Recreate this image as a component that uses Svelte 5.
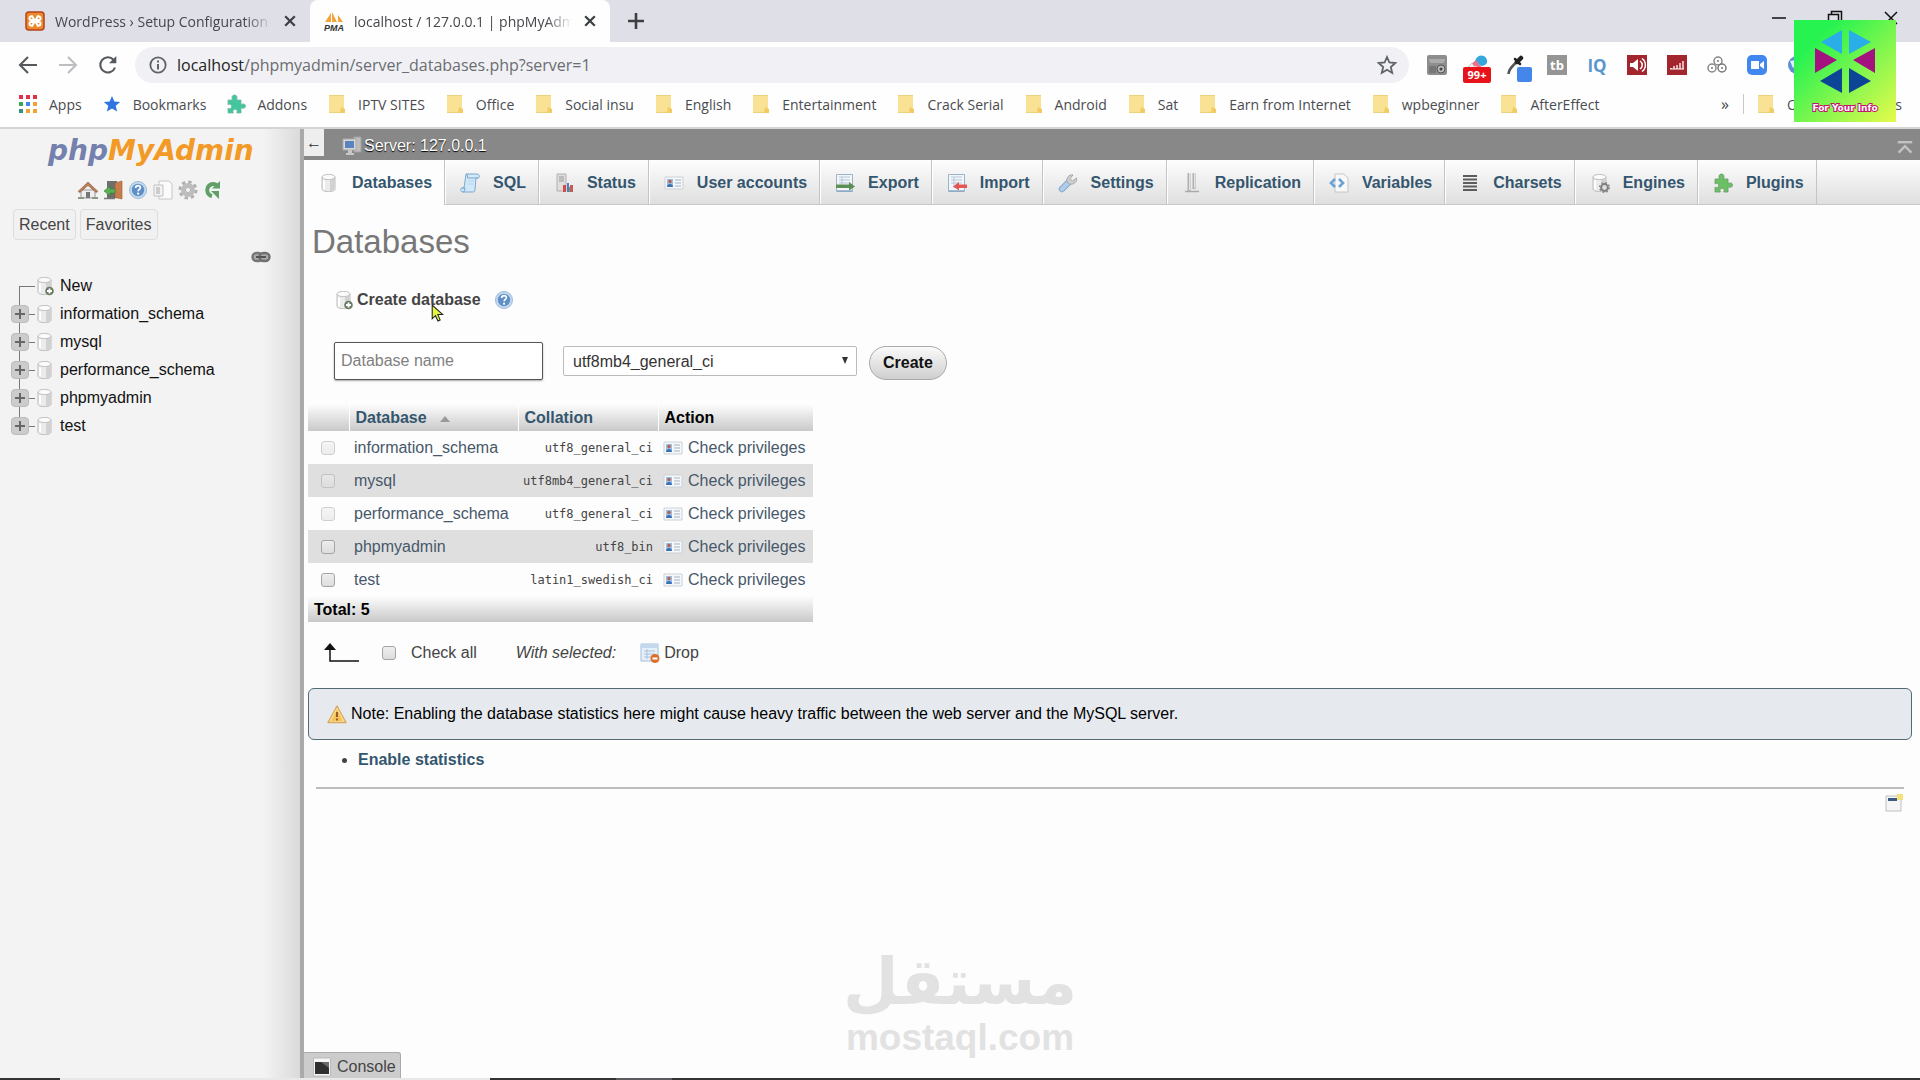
<script lang="ts">
  type Bookmark = { title: string; icon: string };

  const bookmarks: Bookmark[] = [
    { title: 'Apps', icon: 'apps' },
    { title: 'Bookmarks', icon: 'bluestar' },
    { title: 'Addons', icon: 'puzzle' },
    { title: 'IPTV SITES', icon: 'folder' },
    { title: 'Office', icon: 'folder' },
    { title: 'Social insu', icon: 'folder' },
    { title: 'English', icon: 'folder' },
    { title: 'Entertainment', icon: 'folder' },
    { title: 'Crack Serial', icon: 'folder' },
    { title: 'Android', icon: 'folder' },
    { title: 'Sat', icon: 'folder' },
    { title: 'Earn from Internet', icon: 'folder' },
    { title: 'wpbeginner', icon: 'folder' },
    { title: 'AfterEffect', icon: 'folder' },
  ];

  const extensions = ['tineye', 'rocket', 'picker', 'tb', 'iq', 'speaker', 'bars', 'circles', 'zoom', 'globe'];

  const tabs = [
    { title: 'Databases', icon: 'db' },
    { title: 'SQL', icon: 'sql' },
    { title: 'Status', icon: 'status' },
    { title: 'User accounts', icon: 'card' },
    { title: 'Export', icon: 'export' },
    { title: 'Import', icon: 'import' },
    { title: 'Settings', icon: 'wrench' },
    { title: 'Replication', icon: 'replication' },
    { title: 'Variables', icon: 'variables' },
    { title: 'Charsets', icon: 'charsets' },
    { title: 'Engines', icon: 'engines' },
    { title: 'Plugins', icon: 'plugin' },
  ];

  const navIcons = [
    { title: 'Home', icon: 'home' },
    { title: 'Log out', icon: 'exit' },
    { title: 'Documentation', icon: 'help' },
    { title: 'SQL docs', icon: 'docs' },
    { title: 'Panel settings', icon: 'gear' },
    { title: 'Reload', icon: 'refresh' },
  ];

  // system = can't be dropped, checkbox disabled
  const databases = [
    { name: 'information_schema', collation: 'utf8_general_ci', system: true },
    { name: 'mysql', collation: 'utf8mb4_general_ci', system: true },
    { name: 'performance_schema', collation: 'utf8_general_ci', system: true },
    { name: 'phpmyadmin', collation: 'utf8_bin', system: false },
    { name: 'test', collation: 'latin1_swedish_ci', system: false },
  ];

  let dbName = $state('');
  let selected: string[] = $state([]);

  const droppable = databases.filter((d) => !d.system).map((d) => d.name);
  let allChecked = $derived(selected.length === droppable.length);
  const toggleAll = () => { selected = allChecked ? [] : [...droppable]; };
</script>

{#snippet icon(name: string)}
  <svg class="icon" viewBox="0 0 20 20" aria-hidden="true">
    {#if name === 'folder'}
      <path d="M2 1h15v18H2z" fill="#f9e293" />
      <path d="M2 1h15v1H2zM2 18h15v1H2z" fill="#edd27c" />
      <path d="M14 13l4 2v4h-5z" fill="#f2cb62" />
    {:else if name === 'apps'}
      <path d="M1 1h4v4H1zM8 1h4v4H8zM15 1h4v4h-4z" fill="#e2304a" />
      <path d="M1 8h4v4H1z" fill="#3aa757" /><path d="M8 8h4v4H8z" fill="#4285f4" />
      <path d="M15 8h4v4h-4zM8 15h4v4H8zM15 15h4v4h-4z" fill="#f0a330" /><path d="M1 15h4v4H1z" fill="#3a8f83" />
    {:else if name === 'bluestar'}
      <path d="M10 2l2.300 5.400 5.900.500-4.500 3.900 1.400 5.700L10 14.500l-5.100 3 1.400-5.700-4.500-3.900 5.900-.500z" fill="#2f74e0" />
    {:else if name === 'puzzle' || name === 'plugin'}
      <path d="M2 6h4.500C5.300 3.500 6 1 8.500 1s3.200 2.500 2 5H15v4.500c2.500-1.200 4.500-.5 4.500 1.500s-2 3-4.500 1.700V19h-4.200c1-2.600 0-3.800-1.700-3.800S6.300 16.500 7.300 19H2v-4.800c2 1 3.500.3 3.500-1.700S4 9.700 2 10.800z"
        fill={name === 'puzzle' ? '#43c59e' : '#6cc064'} stroke={name === 'puzzle' ? '#72b8a2' : '#6b9a6b'} stroke-width=".8" />
    {:else if name === 'db' || name === 'dbnew' || name === 'engines'}
      <path d="M3 4v12c0 1.600 3 2.600 6.500 2.600S16 17.600 16 16V4" fill="#ebebeb" stroke="#bdbdbd" />
      <path d="M11 6.500v12c3-.200 5-1.200 5-2.500V4.500c-1 1.300-3 2-5 2z" fill="#d2d2d2" />
      <path d="M5 7.500v9" stroke="#fff" stroke-width="2" />
      <ellipse cx="9.500" cy="4" rx="6.500" ry="2.600" fill="#fbfbfb" stroke="#c2c2c2" />
      {#if name === 'dbnew'}
        <circle cx="14.500" cy="15" r="4.300" fill="#6c7b63" /><path d="M14.500 12.500v5M12 15h5" stroke="#fff" stroke-width="1.800" />
      {:else if name === 'engines'}
        <circle cx="14.500" cy="14.500" r="3.400" fill="#ddd" stroke="#7f7f7f" stroke-width="2" />
        <circle cx="14.500" cy="14.500" r="4.800" fill="none" stroke="#888" stroke-width="1.500" stroke-dasharray="1.900 1.870" />
      {/if}
    {:else if name === 'sql'}
      <path d="M6 1h11c3 0 3 4 1 4h-2l-1 11c0 3-1 3-3 3H3c-3 0-3-4-1-4h2z" fill="#d3e8f7" stroke="#78a9cf" />
      <path d="M6 1c2 0 1.500 4 1.500 4H18M3 19c2 0 2-4 2-4H2" fill="none" stroke="#78a9cf" />
      <path d="M8 8h6M7.500 11h6" stroke="#b3d3ec" />
    {:else if name === 'status'}
      <path d="M3 1h9v17H3z" fill="#dedede" stroke="#b0b0b0" /><path d="M5 4h5M5 6h5M5 8h5" stroke="#999" />
      <path d="M9 12h3v7H9z" fill="#d84b41" /><path d="M13 10h2v9h-2z" fill="#4c7bd0" /><path d="M16 12h3v7h-3z" fill="#c85a5a" /><path d="M15 14h1v5h-1z" fill="#5aa858" />
    {:else if name === 'card'}
      <path d="M1 4h18v12H1z" fill="#f4f8fb" stroke="#ccd1d6" />
      <path d="M3 6h6v8H3z" fill="#9dbde0" /><circle cx="6" cy="8.500" r="1.700" fill="#b5614d" /><path d="M3 14c0-4 6-4 6 0z" fill="#3971b8" />
      <path d="M11 7h6M11 10h6M11 13h6" stroke="#a5b3c1" />
    {:else if name === 'export' || name === 'import'}
      <path d="M1.500 1.500h16v17h-16z" fill="#f2f6fa" stroke="#9db3c9" />
      <path d="M4 4h11M4 7h11M4 10h11M7 4v11" stroke="#b4c6d6" />
      {#if name === 'export'}
        <path d="M1 11.500h13V9l6 4.500-6 4v-2.500H1z" fill="#5b8f55" />
      {:else}
        <path d="M20 11.500h-8V9l-6 4.500 6 4v-2.500h8z" fill="#e25656" />
      {/if}
      <path d="M2 18h15" stroke="#8ba8c6" stroke-width="1.500" />
    {:else if name === 'wrench'}
      <path d="M4 16l6.500-6.500" stroke="#86aace" stroke-width="6.500" stroke-linecap="round" />
      <path d="M4 16l6.500-6.500" stroke="#b0cce8" stroke-width="4.500" stroke-linecap="round" />
      <path d="M9 9c-1-4 2-8 6-7l-3 3.500 2.500 2.500L18.500 5c1 4-3 7-7 6z" fill="#cfcfcf" stroke="#999" stroke-width=".8" />
    {:else if name === 'replication'}
      <path d="M7 0v18M12 0v16" stroke="#b0b0b0" stroke-width="3" /><path d="M7.500 0v17M12.500 0v15" stroke="#e4e4e4" />
      <path d="M3 18.500h14" stroke="#aaa" stroke-width="1.500" />
    {:else if name === 'variables'}
      <path d="M6 1h9l4 4v14H6z" fill="#f8f8f8" stroke="#c6c6c6" />
      <path d="M6 6l-4 4 4 4M10 6l4 4-4 4" fill="none" stroke="#6ba3d6" stroke-width="2.600" />
    {:else if name === 'charsets'}
      <path d="M3 3h14M3 6.500h14M3 10h14M3 13.500h14M3 17h14" stroke="#5d5d5d" stroke-width="2" />
    {:else if name === 'home'}
      <path d="M3 10h14v8H3z" fill="#eee" stroke="#999" /><path d="M8 12h4v6H8z" fill="#777" />
      <path d="M0 11.500L10 2l10 9.500-2 1L10 5.500l-8 7z" fill="#b97e58" stroke="#8f6143" stroke-width=".6" />
      <path d="M0 18h6M14 18h6" stroke="#8b9a80" stroke-width="2" />
    {:else if name === 'exit'}
      <path d="M4 1h10v17H4z" fill="#6c6f6c" /><path d="M12 3l7-2v18l-7-1.500z" fill="#c77d49" stroke="#9c5c31" stroke-width=".6" />
      <path d="M12 9H7V6l-6 5 6 5v-3h5z" fill="#58b253" stroke="#3b7d38" stroke-width=".6" /><path d="M1 18.500h11" stroke="#777" stroke-width="1.500" />
    {:else if name === 'help'}
      <circle cx="10" cy="10" r="8.500" fill="#c4daee" stroke="#9dbbd8" /><circle cx="10" cy="10" r="6.200" fill="#5f8fc6" />
      <path d="M7.600 8c0-3.400 5-3.100 4.800-.300-.1 1.600-2.300 1.700-2.300 3.500" fill="none" stroke="#fff" stroke-width="1.700" /><circle cx="10.100" cy="13.700" r="1.100" fill="#fff" />
    {:else if name === 'docs'}
      <path d="M6 1h10l3 3v15H6z" fill="#fbfbfb" stroke="#c6c6c6" /><path d="M1 5h9v11H1z" fill="#f3f3f3" stroke="#c2c2c2" /><path d="M3 7h4v7H3z" fill="#ccc" />
    {:else if name === 'gear'}
      <circle cx="10" cy="10" r="8" fill="none" stroke="#b0b0b0" stroke-width="3" stroke-dasharray="3.300 2.983" />
      <circle cx="10" cy="10" r="5" fill="#eee" stroke="#bdbdbd" stroke-width="4" /><circle cx="10" cy="10" r="2.600" fill="#f3f3f3" stroke="#a0a0a0" stroke-width=".8" />
    {:else if name === 'refresh'}
      <path d="M14 5.500A6 6 0 1 0 9 16" fill="none" stroke="#5fa066" stroke-width="4" />
      <path d="M9 8.500h8V1z" fill="#5fa066" /><path d="M8 11h8v8z" fill="#5fa066" />
    {:else if name === 'link'}
      <rect x="1.500" y="6" width="10" height="8" rx="4" fill="#aaa" stroke="#777" stroke-width="2.400" />
      <rect x="8.500" y="6" width="10" height="8" rx="4" fill="#aaa" stroke="#707070" stroke-width="2.400" /><path d="M5 10h10" stroke="#555" stroke-width="2" />
    {:else if name === 'server'}
      <path d="M12 1h7v15h-7z" fill="#bdbdbd" stroke="#a0a0a0" /><path d="M1 3h13v11H1z" fill="#d6d6d6" stroke="#aaa" />
      <path d="M3 5h9v7H3z" fill="#5b83bd" /><path d="M6 14h4v3h2v2H4v-2h2z" fill="#c7c7c7" />
    {:else if name === 'warning'}
      <path d="M10 2l9 16.500H1z" fill="#fbe3a2" stroke="#dba75c" stroke-width="1.300" stroke-linejoin="round" />
      <path d="M10 5l6 12H4z" fill="#f5c457" /><path d="M10 8v5M10 14.500v2" stroke="#9c5a2b" stroke-width="2" />
    {:else if name === 'drop'}
      <path d="M1 1h17v17H1z" fill="#e6f0fa" stroke="#a3bed8" /><path d="M1 1h17v4H1z" fill="#c3d8ec" /><path d="M4 8h11M4 11h11M4 14h8M7 6v10" stroke="#a9c1d8" />
      <circle cx="15" cy="15.500" r="4.500" fill="#d9702c" /><path d="M12.500 15.500h5" stroke="#fff" stroke-width="2" />
    {:else if name === 'window'}
      <path d="M2 3h15v15H2z" fill="#f5f5f5" stroke="#c0c0c0" /><path d="M4 5h9v3H4z" fill="#3b5a80" />
      <path d="M13 1h6v6h-6z" fill="#f5e27a" />
    {:else if name === 'console'}
      <path d="M1.500 1h17v18h-17z" fill="#f5f5f5" stroke="#bbb" /><path d="M3 5h14v12H3z" fill="#2f2f2f" /><path d="M9 5h8v6z" fill="#6a6a6a" />
    {:else if name === 'xampp'}
      <rect x="1" y="1" width="18" height="18" rx="3" fill="#ee8a2c" stroke="#b5421c" stroke-width="1.500" />
      <path d="M6 5.500c-2 0-2 3.500 0 3.500h8c2 0 2-3.500 0-3.500M6 14.500c-2 0-2-3.500 0-3.500h8c2 0 2 3.500 0 3.500M7 5l6 10M13 5L7 15" fill="none" stroke="#fff" stroke-width="2" stroke-linecap="round" />
    {:else if name === 'pma'}
      <path d="M1 11L7 2v9zM8 11V1l5 10zM14 11V4l5 7z" fill="#f2a33a" />
      <text x="10" y="20" text-anchor="middle" class="pma-text">PMA</text>
    {:else if name === 'back' || name === 'forward'}
      <path d={name === 'back' ? 'M19 10H2.500M10 2l-8 8 8 8' : 'M1 10h16.500M10 2l8 8-8 8'} fill="none" stroke={name === 'back' ? '#55585c' : '#bcbec1'} stroke-width="2.100" />
    {:else if name === 'reload'}
      <path d="M17 12.500A7.600 7.600 0 1 1 15.500 4.700" fill="none" stroke="#55585c" stroke-width="2.100" /><path d="M18.300 1v7.300H11z" fill="#55585c" />
    {:else if name === 'info'}
      <circle cx="10" cy="10" r="8.500" fill="none" stroke="#5f6368" stroke-width="2" /><path d="M10 9v6M10 5v2.200" stroke="#5f6368" stroke-width="2.200" />
    {:else if name === 'star'}
      <path d="M10 2l2.400 5.500 6 .500-4.600 4 1.400 5.900L10 14.800l-5.200 3.100L6.200 12 1.600 8l6-.500z" fill="none" stroke="#5f6368" stroke-width="1.800" />
    {:else if name === 'tineye'}
      <rect width="20" height="20" rx="2" fill="#8d8d8d" />
      <path d="M2 5h16M3 7h14" stroke="#c9c9c9" stroke-width="1.200" /><circle cx="14" cy="14" r="4" fill="#b9b9b9" stroke="#555" /><circle cx="14" cy="14" r="1.500" fill="#444" />
      <path d="M2 11h7v7H2z" fill="#777" />
    {:else if name === 'rocket'}
      <path d="M8 6c2-6 8-7 11-3s0 8-5 8z" fill="#35a7dc" /><path d="M3 10l6-5 6 8z" fill="#e8728a" /><path d="M1 12l4-4 4 6z" fill="#eee" stroke="#aaa" stroke-width=".5" />
    {:else if name === 'picker'}
      <path d="M1.500 19c0-5 4-8 8-12" fill="none" stroke="#555" stroke-width="2.600" />
      <path d="M8 4l5 5" stroke="#222" stroke-width="2.500" stroke-linecap="round" /><path d="M10 7l4-4" stroke="#222" stroke-width="4.500" stroke-linecap="round" />
    {:else if name === 'tb'}
      <rect width="20" height="20" fill="#959595" /><text x="10" y="15" text-anchor="middle" class="tb-text">tb</text>
    {:else if name === 'iq'}
      <text x="10" y="17" text-anchor="middle" class="iq-text">IQ</text>
    {:else if name === 'speaker'}
      <rect width="20" height="20" fill="#a3252d" /><path d="M3 8h3l5-4v12l-5-4H3z" fill="#fff" /><path d="M13 6c3 2 3 6 0 8M15 3.500c4.500 3 4.500 10 0 13" fill="none" stroke="#fff" stroke-width="1.500" />
    {:else if name === 'bars'}
      <rect width="20" height="20" fill="#a3252d" /><path d="M4 14v-1M7 14v-3M10 14v-4M13 14V8M16 14V6" stroke="#f3d5d5" stroke-width="1.600" /><path d="M3 14h14" stroke="#fff" />
    {:else if name === 'circles'}
      <circle cx="11" cy="6" r="4" fill="none" stroke="#888" stroke-width="1.500" /><circle cx="5" cy="13" r="4" fill="none" stroke="#888" stroke-width="1.500" />
      <circle cx="15" cy="13" r="4" fill="none" stroke="#777" stroke-width="1.500" /><circle cx="11" cy="6" r="1" fill="#777" /><circle cx="5" cy="13" r="1" fill="#777" /><circle cx="15" cy="13" r="1" fill="#777" />
    {:else if name === 'zoom'}
      <rect width="20" height="20" rx="5" fill="#4087f0" /><path d="M4 6h8v8H4zM13 9l4-3v8l-4-3z" fill="#fff" />
    {:else if name === 'globe'}
      <circle cx="10" cy="10" r="9" fill="#5d8fd6" /><path d="M3 6l6-1 2 4-5 4z" fill="#e4eefb" />
    {:else if name === 'plus'}
      <path d="M10 2v16M2 10h16" stroke="#3c4043" stroke-width="2.600" />
    {:else if name === 'close'}
      <path d="M4 4l12 12M16 4L4 16" stroke="#3c4043" stroke-width="2.800" />
    {:else if name === 'min'}
      <path d="M3 10h14" stroke="#111" stroke-width="1.500" />
    {:else if name === 'restore'}
      <path d="M3.500 6.500h10v10h-10zM6.500 6.500v-3h10v10h-3" fill="none" stroke="#111" stroke-width="1.500" />
    {:else if name === 'winclose'}
      <path d="M4 4l12 12M16 4L4 16" stroke="#111" stroke-width="1.500" />
    {:else if name === 'top'}
      <path d="M1 4h18" stroke="#c2c2c2" stroke-width="3" /><path d="M2 17l8-8 8 8" fill="none" stroke="#c2c2c2" stroke-width="3" />
    {/if}
  </svg>
{/snippet}

<div class="window">
  <header class="browser">
    <div class="tabstrip">
      <div class="btab">
        {@render icon('xampp')}
        <span class="btitle">WordPress › Setup Configuration</span>
        <button class="bclose" aria-label="Close tab">{@render icon('close')}</button>
      </div>
      <div class="btab current">
        {@render icon('pma')}
        <span class="btitle">localhost / 127.0.0.1 | phpMyAdmin</span>
        <button class="bclose" aria-label="Close tab">{@render icon('close')}</button>
      </div>
      <button class="newtab" aria-label="New tab">{@render icon('plus')}</button>
      <div class="wincontrols">
        <button aria-label="Minimize">{@render icon('min')}</button>
        <button aria-label="Restore">{@render icon('restore')}</button>
        <button aria-label="Close window">{@render icon('winclose')}</button>
      </div>
    </div>

    <div class="toolbar">
      <div class="navbuttons">
        <button aria-label="Back">{@render icon('back')}</button>
        <button aria-label="Forward">{@render icon('forward')}</button>
        <button aria-label="Reload">{@render icon('reload')}</button>
      </div>
      <div class="address">
        {@render icon('info')}
        <span class="url"><b>localhost</b>/phpmyadmin/server_databases.php?server=1</span>
        <button aria-label="Bookmark this tab">{@render icon('star')}</button>
      </div>
      <div class="extensions">
        {#each extensions as ext}
          <button class="ext" aria-label={ext}>
            {@render icon(ext)}
            {#if ext === 'rocket'}<span class="badge">99+</span>{/if}
            {#if ext === 'picker'}<span class="swatch"></span>{/if}
          </button>
        {/each}
      </div>
    </div>

    <nav class="bookmarks" aria-label="Bookmarks bar">
      {#each bookmarks as b}
        <a href="#bookmark">{@render icon(b.icon)}{b.title}</a>
      {/each}
      <div class="other">
        <button class="more" aria-label="More bookmarks">»</button>
        <a href="#bookmark">{@render icon('folder')}Other bookmarks</a>
      </div>
    </nav>
  </header>

  <div class="page">
    <aside class="sidebar">
      <a class="logo" href="#home"><span>php</span>MyAdmin</a>
      <div class="navicons">
        {#each navIcons as n}
          <a href="#nav" aria-label={n.title}>{@render icon(n.icon)}</a>
        {/each}
      </div>
      <div class="quick">
        <button>Recent</button>
        <button>Favorites</button>
      </div>
      <div class="linkrow"><button aria-label="Unlink from main panel">{@render icon('link')}</button></div>
      <ul class="tree">
        <li>
          <span class="branch first"></span>
          <a href="#new">{@render icon('dbnew')}New</a>
        </li>
        {#each databases as db, i}
          <li>
            <span class="branch" class:last={i === databases.length - 1}>
              <button aria-label="Expand {db.name}"></button>
            </span>
            <a href="#db">{@render icon('db')}{db.name}</a>
          </li>
        {/each}
      </ul>
    </aside>

    <div class="main">
      <div class="serverbar">
        <button class="collapse" aria-label="Hide panel">←</button>
        <a href="#server">{@render icon('server')}Server: 127.0.0.1</a>
        <button class="totop" aria-label="Back to top">{@render icon('top')}</button>
      </div>

      <nav class="topmenu" aria-label="Server menu">
        {#each tabs as tab, i}
          <a href="#tab" class:active={i === 0}>{@render icon(tab.icon)}{tab.title}</a>
        {/each}
      </nav>

      <main>
        <h2>Databases</h2>

        <form class="create" onsubmit={(e) => e.preventDefault()}>
          <div class="caption">
            {@render icon('dbnew')}
            <label for="new_db">Create database</label>
            <a href="#help" aria-label="Documentation">{@render icon('help')}</a>
            <svg class="pointer" viewBox="0 0 12 17" aria-hidden="true">
              <path d="M1 1v13l3-3 2.500 5 2-1L6.300 10H11z" fill="#e3f542" stroke="#222" />
            </svg>
          </div>
          <div class="fields">
            <input id="new_db" type="text" placeholder="Database name" bind:value={dbName} />
            <div class="select">
              <select aria-label="Collation">
                <option>utf8mb4_general_ci</option>
                <option>utf8_general_ci</option>
                <option>latin1_swedish_ci</option>
              </select>
            </div>
            <button>Create</button>
          </div>
        </form>

        <table>
          <thead>
            <tr>
              <th class="c-check"></th>
              <th class="c-name"><a href="#sort">Database <span class="asc"></span></a></th>
              <th class="c-coll"><a href="#sort">Collation</a></th>
              <th class="c-action">Action</th>
            </tr>
          </thead>
          <tbody>
            {#each databases as db}
              <tr>
                <td class="c-check">
                  <input type="checkbox" aria-label="Select {db.name}" value={db.name} bind:group={selected} disabled={db.system} />
                </td>
                <td><a href="#db">{db.name}</a></td>
                <td class="coll">{db.collation}</td>
                <td><a class="priv" href="#priv">{@render icon('card')}Check privileges</a></td>
              </tr>
            {/each}
          </tbody>
          <tfoot>
            <tr><th colspan="4">Total: {databases.length}</th></tr>
          </tfoot>
        </table>

        <div class="withselected">
          <svg class="uparrow" viewBox="0 0 36 20" aria-hidden="true">
            <path d="M6 5v13h29" fill="none" stroke="#111" stroke-width="1.500" /><path d="M6 0l6 7H0z" fill="#111" />
          </svg>
          <input type="checkbox" id="checkall" checked={allChecked} onchange={toggleAll} />
          <label for="checkall">Check all</label>
          <i>With selected:</i>
          <button>{@render icon('drop')}Drop</button>
        </div>

        <div class="notice">
          {@render icon('warning')}
          Note: Enabling the database statistics here might cause heavy traffic between the web server and the MySQL server.
        </div>
        <ul class="stats"><li><a href="#stats">Enable statistics</a></li></ul>
        <hr />
        <div class="newwindow"><a href="#window" aria-label="Open new window">{@render icon('window')}</a></div>
      </main>

      <button class="console">{@render icon('console')}Console</button>
    </div>
  </div>

  <footer class="taskbar"><span></span><span></span><span></span></footer>

  <div class="watermark">
    <span class="arabic" lang="ar">مستقل</span>
    <span class="latin">mostaql.com</span>
  </div>

  <div class="channel">
    <svg viewBox="0 0 102 102" aria-hidden="true">
      <defs>
        <linearGradient id="lime" x1="0" y1="0" x2="1" y2="1">
          <stop offset="0.200" stop-color="#26f250" /><stop offset="1" stop-color="#e6fb4c" />
        </linearGradient>
      </defs>
      <rect width="102" height="102" fill="url(#lime)" />
      <path d="M48 10v24L27 22zM55 10v24L77 22z" fill="#2aaee8" />
      <path d="M21 28v25l22-13zM81 28v25L59 40z" fill="#a3127f" />
      <path d="M48 48v25L26 61zM55 48v25l22-12z" fill="#0d4596" />
      <text x="51" y="91" text-anchor="middle">For Your Info</text>
    </svg>
  </div>
</div>

<style>
:global(body) {
  margin: 0;
  background: #fdfdfd;
}

.window {
  position: relative;
  display: flex;
  flex-direction: column;
  min-height: 100vh;
  font-family: "Liberation Sans", Arial, sans-serif;
  font-size: 16px;
  color: #444;
}

.window * {
  box-sizing: border-box;
}

.icon {
  display: block;
  flex: none;
  width: 20px;
  height: 20px;
}

a {
  color: #47586a;
  text-decoration: none;
}

button {
  padding: 0;
  border: 0;
  background: none;
  font: inherit;
  color: inherit;
  cursor: pointer;
}

/* browser frame */
.browser {
  font-family: "Open Sans", "Noto Sans", sans-serif;
  font-size: 14px;
  background: #fefefe;
  border-bottom: 2px solid #d4d4d4;
}

.tabstrip {
  display: flex;
  align-items: stretch;
  height: 42px;
  background: #dfdfe7;
}

.btab {
  display: flex;
  align-items: center;
  gap: 10px;
  width: 310px;
  padding: 0 12px 0 25px;
  color: #45474b;
}

.btab.current {
  width: 300px;
  padding-left: 14px;
  background: #fefefe;
  border-radius: 8px 8px 0 0;
}

.btitle {
  flex: 1;
  min-width: 0;
  overflow: hidden;
  white-space: nowrap;
  mask-image: linear-gradient(90deg, #000 88%, transparent);
}

.bclose .icon {
  width: 16px;
  height: 16px;
}

.newtab {
  margin-left: 16px;
}

.wincontrols {
  display: flex;
  align-items: flex-start;
  gap: 36px;
  margin-left: auto;
  padding: 8px 19px 0 0;
}

.toolbar {
  display: flex;
  align-items: center;
  height: 45px;
  padding: 0 0 0 18px;
}

.navbuttons {
  display: flex;
  gap: 20px;
  width: 117px;
}

.address {
  flex: 1;
  display: flex;
  align-items: center;
  height: 36px;
  padding: 0 12px 0 14px;
  gap: 10px;
  font-size: 16px;
  color: #6a6d71;
  background: #f1f1f5;
  border-radius: 18px;
}

.address > .icon {
  width: 18px;
  height: 18px;
}

.url {
  flex: 1;
}

.url b {
  font-weight: 400;
  color: #222;
}

.extensions {
  display: flex;
  gap: 20px;
  padding: 0 113px 0 18px;
}

.ext {
  position: relative;
}

.badge {
  position: absolute;
  top: 12px;
  left: -4px;
  width: 28px;
  height: 16px;
  border-radius: 2px;
  background: #e8131a;
  color: #fff;
  font-size: 11px;
  font-weight: 700;
  line-height: 16px;
}

.swatch {
  position: absolute;
  top: 12px;
  left: 10px;
  width: 15px;
  height: 15px;
  border-radius: 2px;
  background: #4586ea;
}

.bookmarks {
  display: flex;
  align-items: center;
  gap: 20px;
  height: 40px;
  padding: 0 18px 6px 18px;
}

.bookmarks a {
  display: flex;
  align-items: center;
  gap: 11px;
  color: #4a4c50;
  white-space: nowrap;
}

.other {
  display: flex;
  align-items: center;
  margin-left: auto;
}

.other a {
  padding-left: 12px;
  border-left: 1px solid #c8c8c8;
}

.more {
  padding-right: 14px;
  font-size: 16px;
}

.pma-text {
  font: italic 700 9px "Liberation Sans", sans-serif;
  fill: #333;
}

.tb-text {
  font: 700 13px "Open Sans", sans-serif;
  fill: #fff;
}

.iq-text {
  font: 700 17px "Open Sans", sans-serif;
  fill: #5b96cf;
}

/* left panel */
.page {
  flex: 1;
  display: flex;
}

.sidebar {
  width: 304px;
  flex: none;
  border-right: 4px solid #aaa;
  background: linear-gradient(90deg, #f3f3f3 88%, #dadada);
}

.logo {
  display: block;
  padding: 4px 0 0 48px;
  font: italic 700 28px/36px "DejaVu Sans", sans-serif;
  color: #f39a26;
}

.logo span {
  color: #7480ad;
}

.navicons {
  display: flex;
  gap: 5px;
  padding: 11px 0 0 78px;
}

.quick {
  display: flex;
  gap: 4px;
  padding: 9px 0 0 13px;
}

.quick button {
  height: 31px;
  padding: 0 5px;
  border: 1px solid #ddd;
  border-radius: 4px;
  background: #f1f1f1;
}

.linkrow {
  display: flex;
  justify-content: flex-end;
  padding: 7px 29px 0 0;
}

.tree {
  margin: 5px 0 0;
  padding: 0 0 0 11px;
  list-style: none;
}

.tree li {
  display: flex;
  align-items: center;
  height: 28px;
}

.tree a {
  display: flex;
  align-items: center;
  gap: 5px;
  color: #111;
}

.branch {
  display: flex;
  align-items: center;
  align-self: stretch;
  width: 24px;
  background:
    linear-gradient(#777, #777) 8px 0 / 1px 100% no-repeat,
    linear-gradient(#777, #777) 8px 50% / 16px 1px no-repeat;
}

.branch.first {
  background:
    linear-gradient(#777, #777) 8px 100% / 1px 50% no-repeat,
    linear-gradient(#777, #777) 8px 50% / 16px 1px no-repeat;
}

.branch.last {
  background:
    linear-gradient(#777, #777) 8px 0 / 1px 50% no-repeat,
    linear-gradient(#777, #777) 8px 50% / 16px 1px no-repeat;
}

.branch button {
  width: 18px;
  height: 18px;
  border: 1px solid #bbb;
  border-radius: 4px;
  background:
    linear-gradient(#666, #666) center / 10px 2px no-repeat,
    linear-gradient(#666, #666) center / 2px 10px no-repeat,
    #ccc;
}

/* right panel */
.main {
  flex: 1;
  min-width: 0;
  display: flex;
  flex-direction: column;
}

.serverbar {
  display: flex;
  align-items: center;
  height: 31px;
  background: #888;
}

.serverbar a {
  display: flex;
  align-items: center;
  gap: 2px;
  margin-left: 18px;
  padding-top: 3px;
  color: #fff;
  text-shadow: 0 1px 1px #000;
}

.collapse {
  align-self: flex-start;
  width: 20px;
  height: 27px;
  background: #eee;
  color: #333;
}

.totop {
  margin: 4px 7px 0 auto;
}

.totop .icon {
  width: 16px;
  height: 16px;
}

.topmenu {
  display: flex;
  height: 45px;
  border-bottom: 1px solid #c8c8c8;
  background: linear-gradient(#fdfdfd, #dfdfdf);
}

.topmenu a {
  display: flex;
  align-items: center;
  gap: 13px;
  padding: 1px 12px 0 14px;
  border-left: 1px solid #fff;
  border-right: 1px solid #c4c4c4;
  font-weight: 700;
  color: #34566e;
}

.topmenu a.active {
  height: 45px;
  background: #fdfdfd;
}

main {
  padding: 0 8px 0 4px;
}

h2 {
  margin: 18px 0 0 4px;
  font-size: 33px;
  line-height: 38px;
  font-weight: 400;
  color: #777;
}

.create {
  padding: 25px 0 0 26px;
}

.caption {
  position: relative;
  display: flex;
  align-items: center;
  height: 28px;
  gap: 3px;
}

.caption label {
  font-weight: 700;
}

.caption a {
  margin-left: 10px;
}

.pointer {
  position: absolute;
  left: 97px;
  top: 18px;
  width: 13px;
  height: 18px;
}

.fields {
  display: flex;
  align-items: center;
  padding-top: 28px;
}

.fields input {
  width: 209px;
  height: 38px;
  padding: 0 6px;
  border: 1px solid #555;
  border-radius: 2px;
  background: #fff;
  box-shadow: 0 1px 2px #aaa;
  font: inherit;
  color: #333;
}

.fields input::placeholder {
  color: #808080;
  opacity: 1;
}

.select {
  position: relative;
  margin: 0 12px 0 20px;
}

.select::after {
  content: "";
  position: absolute;
  right: 9px;
  top: 11px;
  border: 3px solid transparent;
  border-top: 7px solid #333;
  border-bottom: 0;
  pointer-events: none;
}

select {
  appearance: none;
  display: block;
  width: 294px;
  height: 30px;
  padding: 0 9px;
  border: 1px solid #bbb;
  border-radius: 2px;
  background: #fff;
  font: inherit;
  color: #333;
}

.fields button {
  height: 34px;
  margin-top: 3px;
  padding: 0 13px;
  border: 1px solid #aaa;
  border-radius: 17px;
  background: linear-gradient(#fafafa, #cfcfcf);
  font-weight: 700;
  color: #111;
}

table {
  margin-top: 24px;
  border-collapse: collapse;
}

th {
  height: 27px;
  padding: 1px 6px 0;
  text-align: left;
  color: #000;
  background: linear-gradient(#fdfdfd, #c9c9c9);
}

thead th {
  border-right: 1px solid #fff;
}

th a {
  color: #34566e;
}

tfoot th {
  height: 26px;
}

td {
  height: 33px;
  padding: 0 5px;
}

tbody tr:nth-child(even) {
  background: #dfdfdf;
}

.c-check {
  width: 41px;
}

.c-name {
  width: 169px;
}

.c-coll {
  width: 140px;
}

.c-action {
  width: 155px;
}

td.c-check {
  padding-left: 13px;
}

.coll {
  text-align: right;
  font: 12px "DejaVu Sans Mono", monospace;
}

.priv {
  display: flex;
  align-items: center;
  gap: 5px;
}

.asc {
  display: inline-block;
  margin: 0 0 1px 9px;
  border: 5px solid transparent;
  border-top: 0;
  border-bottom: 6px solid #999;
}

input[type="checkbox"] {
  appearance: none;
  display: block;
  width: 14px;
  height: 14px;
  margin: 0;
  border: 1px solid #a4a4a4;
  border-radius: 3px;
  background: linear-gradient(#eee, #ddd);
}

input[type="checkbox"]:checked {
  background: #666;
}

input[type="checkbox"]:disabled {
  opacity: .5;
}

.withselected {
  display: flex;
  align-items: center;
  height: 62px;
  padding-left: 16px;
}

.uparrow {
  width: 36px;
  height: 20px;
}

.withselected input {
  margin: 0 15px 0 22px;
}

.withselected i {
  margin: 0 24px 0 39px;
}

.withselected button {
  display: flex;
  align-items: center;
  gap: 4px;
}

.notice {
  display: flex;
  align-items: center;
  gap: 4px;
  height: 52px;
  margin-top: 4px;
  padding-left: 18px;
  border: 1px solid #536a77;
  border-radius: 6px;
  background: #e6eaef;
  color: #000;
}

.stats {
  margin: 11px 0 0;
  padding-left: 50px;
}

.stats a {
  font-weight: 700;
  color: #34566e;
}

hr {
  height: 2px;
  margin: 18px 8px 0;
  border: 0;
  background: #bdbdbd;
}

.newwindow {
  display: flex;
  justify-content: flex-end;
  padding: 4px 8px 0 0;
}

.console {
  display: flex;
  align-items: center;
  align-self: flex-start;
  gap: 5px;
  height: 26px;
  margin-top: auto;
  padding: 2px 4px 0 8px;
  border: 1px solid #aaa;
  border-width: 1px 1px 0 0;
  border-radius: 0 3px 0 0;
  background: #ccc;
}

/* sliver of the taskbar under the window */
.taskbar {
  display: flex;
  height: 2px;
  background: #333;
}

.taskbar span:nth-child(1) {
  width: 60px;
}

.taskbar span:nth-child(2) {
  width: 430px;
  background: #e8e8e8;
}

.taskbar span:nth-child(3) {
  width: 56px;
  margin-left: 126px;
  background: #5a5a5f;
}

/* overlays */
.watermark {
  position: absolute;
  left: 0;
  right: 0;
  bottom: 21px;
  display: flex;
  flex-direction: column;
  align-items: center;
  color: #e2e2e2;
  pointer-events: none;
}

.arabic {
  font: 700 64px/70px "DejaVu Sans", sans-serif;
}

.latin {
  font-size: 37px;
  line-height: 42px;
  font-weight: 700;
}

.channel {
  position: absolute;
  top: 20px;
  right: 24px;
  width: 102px;
  height: 102px;
}

.channel text {
  font: 700 9px "DejaVu Sans", sans-serif;
  fill: #fff;
  stroke: #c2156d;
  stroke-width: 2px;
  paint-order: stroke;
}
</style>
